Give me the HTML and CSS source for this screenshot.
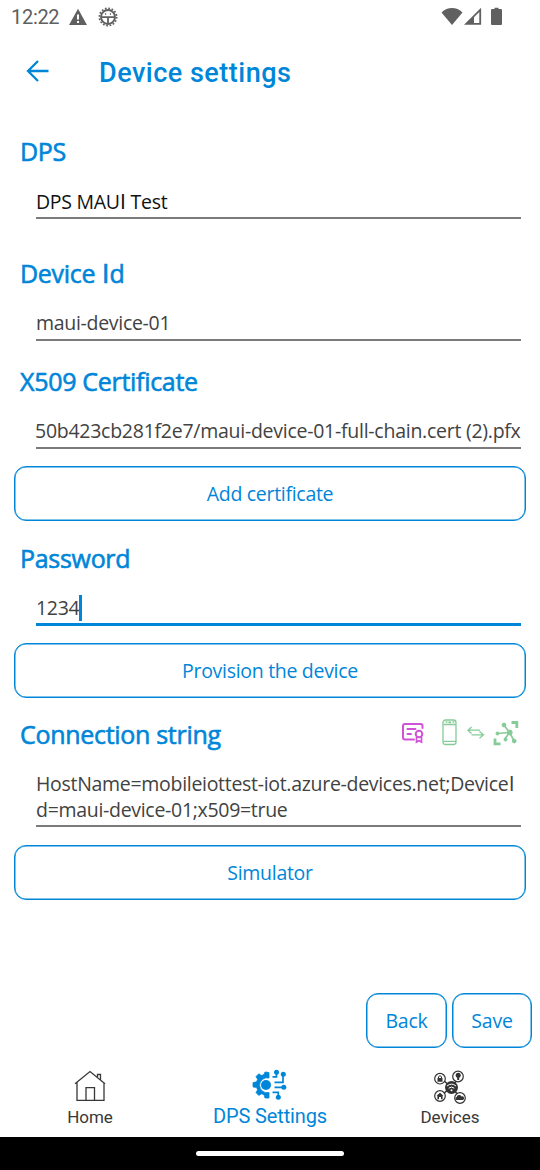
FILE: index.html
```html
<!DOCTYPE html>
<html lang="en">
<head>
<meta charset="utf-8">
<title>Device settings</title>
<link rel="stylesheet" href="styles.css">
</head>
<body>
<div class="screen">
  <div class="status">
    <span class="clock">12:22</span>
    <svg class="warn" width="20" height="18" viewBox="0 0 20 18"><path d="M10 .8 19 17H1z" fill="#606060"/><path d="M10 6.5v5M10 13v2" stroke="#fff" stroke-width="2"/></svg>
    <svg class="debug" width="20" height="20" viewBox="0 0 20 20" fill="none" stroke="#606060"><circle cx="10" cy="10" r="8.6" stroke-width="1.800" stroke-dasharray="1.7 1.68"/><circle cx="10" cy="10" r="7" stroke-width="1.900"/><path d="M3 10.200h14M10 10v7" stroke-width="1.800"/><path d="M7 7h1.200M11.800 7H13" stroke-width="1.300"/></svg>
    <span class="spacer"></span>
    <svg width="62" height="20" viewBox="0 0 62 20" fill="#606060"><path d="M.5 5.400C6.500-.4 15.500-.4 21.500 5.400L11 18z"/><path d="M23 17.700 40.100.800v16.900z"/><path d="M33 10.200l5.300-5.200v11H33z" fill="#fff"/><path d="M51 2h2.500V.800h4V2H60q1 0 1 1v14q0 1-1 1h-9q-1 0-1-1V3q0-1 1-1z"/></svg>
  </div>
  <header class="toolbar">
    <svg width="24" height="24" viewBox="0 0 24 24" fill="none" stroke="#0086d9" stroke-width="2.300"><path d="M12 2 2 12l10 10M2 12h20.500"/></svg>
    <h1>Device settings</h1>
  </header>
  <main class="form">
    <section class="group dps">
      <h2>DPS</h2>
      <div class="field strong"><p>DPS MAU<span class="plain">I</span> Test</p></div>
    </section>
    <section class="group device">
      <h2>Device <span class="plain">I</span>d</h2>
      <div class="field"><p>maui-device-01</p></div>
    </section>
    <section class="group cert">
      <h2>X509 Certificate</h2>
      <div class="field"><p class="path">50b423cb281f2e7/maui-device-01-full-chain.cert (2).pfx</p></div>
      <button class="btn">Add certificate</button>
    </section>
    <section class="group password">
      <h2>Password</h2>
      <div class="field focus"><p>1234<span class="caret"></span></p></div>
      <button class="btn">Provision the device</button>
    </section>
    <section class="group connection">
      <div class="heading-row">
        <h2>Connection string</h2>
        <svg width="120" height="30" viewBox="0 0 120 30" fill="none">
          <g stroke="#d053d6" stroke-width="2" stroke-linecap="round"><path d="M13 20.500H4q-2 0-2-2V7q0-2 2-2h15.500q2 0 2 2v2"/><path d="M6.500 10h8M6.500 15H10"/><circle cx="18" cy="15" r="3.300"/><path d="M15.500 18.500V23l2.500-1.300 2.500 1.300v-4.500" stroke-width="1.700"/></g>
          <g stroke="#86cc98" stroke-width="1.300"><rect x="42" y="1" width="13" height="24.500" rx="2.500"/><path d="M42.400 5.500H55M42.400 22.300H55M44.500 3h2M51.400 3h2"/><path d="M47.400 3.300h2.500" stroke-width="2"/></g>
          <path d="M70.500 8 67 11.200l3.500 3.300M67 11.200h12M78.500 12.500l4 3.300-4 3.400M82.500 15.800h-12" stroke="#86cc98" stroke-width="1.300"/>
          <g transform="translate(1.500 0)" fill="#86cc98" stroke="#86cc98"><path d="m107 13.500-6-8M107 13.500l-13 1M107 13.500l-5 7M107 13.500l4.500 8" stroke-width="1.600"/><circle cx="101.500" cy="6" r="1.900"/><circle cx="95" cy="14.500" r="1.500"/><circle cx="107.300" cy="13.500" r="2.400"/><circle cx="103" cy="20.500" r="1.500"/><circle cx="111.700" cy="22" r="1.900"/><path d="M109 3.500h5.300V9M92.500 19.500v5.300H98" fill="none" stroke-width="2.800"/></g>
        </svg>
      </div>
      <div class="field"><p>HostName=mobileiottest-iot.azure-devices.net;Device<span class="plain">I</span><br>d=maui-device-01;x509=true</p></div>
      <button class="btn">Simulator</button>
    </section>
  </main>
  <div class="actions">
    <button class="btn">Back</button>
    <button class="btn">Save</button>
  </div>
  <nav class="tabs">
    <a class="tab">
      <svg width="34" height="32" viewBox="0 0 34 32" fill="none" stroke="#383838" stroke-width="1.300"><path d="M2 13.700 17 1.500l15 12.200M4 12v18.400h27V12.500M13 30V17.700h8.500V30M24.500 7V4.500h3V10"/></svg>
      <span>Home</span>
    </a>
    <a class="tab active">
      <svg width="36" height="32" viewBox="0 0 36 32" fill="none" stroke="#0086d9"><path d="M17 3.500v5.500a7.500 7.500 0 1 0 0 14.500V29h-4l-.8-3.200-2.700-1-2.700 1.600L4 23.600l1.600-2.700-1-2.400L1 17.900v-4.300l3.600-.8 1-2.500L4 7.600l2.800-2.800 2.700 1.700 2.500-1L13 3z" fill="#0086d9" stroke="#0086d9" stroke-width=".8" stroke-linejoin="round"/><circle cx="14" cy="16" r="5" fill="#0086d9" stroke="none"/><path d="M20.500 7.800h4V3M22.500 13.300h8.500V5M22.500 18.300h9.500M20.500 23.300h5.800V28" stroke-width="1.700"/><g fill="#0086d9" stroke="none"><circle cx="24.500" cy="3.300" r="2.500"/><circle cx="31.300" cy="5.200" r="2.500"/><circle cx="31.800" cy="18.300" r="2.500"/><circle cx="26.300" cy="28.300" r="2.500"/></g></svg>
      <span>DPS Settings</span>
    </a>
    <a class="tab">
      <svg class="hub" width="34" height="34" viewBox="0 0 34 34" fill="none" stroke="#333"><path d="m8 9 9 8 9-10M7 26l10-9 10 11" stroke-width="1.500"/><circle cx="17.500" cy="17.500" r="6.500" fill="#333" stroke="none"/><g fill="#fff" stroke-width="1.200"><circle cx="6" cy="8.700" r="5.300"/><circle cx="24" cy="6.500" r="5.300"/><circle cx="6" cy="26" r="5.300"/><circle cx="26" cy="28" r="5.300"/></g><path d="M13 16q4.500-3.700 9 0M14.700 18.200q2.800-2.300 5.600 0" stroke="#fff" stroke-width="1"/><circle cx="17.500" cy="20.300" r="1" fill="#fff" stroke="none"/><g fill="#333" stroke="none"><path d="M3.500 8h5v3.700h-5zM2.500 25.700 6 22.700l3.500 3H8.600v3.500H7V27H5v2.200H3.400v-3.500zM22.300 30a1.600 1.600 0 0 1 .4-3 2.500 2.500 0 0 1 4.700-.6 1.800 1.800 0 0 1 1.500 3.600z"/><circle cx="24.200" cy="5.300" r="2.500"/><path d="M23.200 7h2v3h-2z"/></g><path d="M4.500 8V6.700q1.500-2 3 0V8" stroke-width="1"/></svg>
      <span>Devices</span>
    </a>
  </nav>
  <div class="gesture"><span></span></div>
</div>
</body>
</html>
```
FILE: styles.css
```css
* { box-sizing: border-box; }
body { margin: 0; background: #fff; font-family: "Open Sans", sans-serif; color: #424242; }
h1, h2, p { margin: 0; font-weight: 400; }
svg { display: block; flex: none; }
.screen { width: 540px; height: 1170px; display: flex; flex-direction: column; background: #fff; overflow: hidden; }
.status { height: 34px; flex: none; display: flex; align-items: center; padding: 0 37px 0 11px; font: 20px/34px Roboto, sans-serif; color: #606060; }
.clock { width: 57px; letter-spacing: -0.3px; }
.debug { margin-left: 10px; }
.spacer { flex: 1; }
.toolbar { height: 78px; flex: none; display: flex; align-items: center; gap: 49px; padding: 0 26px; color: #0086d9; }
.toolbar svg { margin-bottom: 5px; }
.toolbar h1 { font: 500 27px/36px Roboto, sans-serif; letter-spacing: 0.5px; }
.form { padding: 21px 14px 0; flex: 1; }
.group { display: flex; flex-direction: column; }
.group h2 { padding-left: 6px; font-size: 25px; line-height: 36px; letter-spacing: -0.3px; color: #0086d9; -webkit-text-stroke: 0.6px #0086d9; white-space: nowrap; }
/* Capital I without serifs */
.plain { font-family: Roboto, sans-serif; line-height: 1; margin: 0 0.03em; }
.device { margin-top: 36px; }
.cert { margin-top: 22px; }
.password { margin-top: 19px; }
.connection { margin-top: 18px; }
.field { margin: 0 5px 0 22px; height: 50px; padding-top: 19px; font-size: 19.5px; line-height: 26px; letter-spacing: -0.3px; border-bottom: 2px solid #7b7b7b; white-space: nowrap; }
.field.strong { color: #111; padding-top: 20px; }
.path { margin-left: -1px; letter-spacing: -0.26px; }
.cert .btn { margin-top: 17px; }
.field.focus { border-bottom: 3px solid #0086d9; }
.focus p { display: flex; align-items: center; }
.caret { width: 3px; height: 26px; background: #0086d9; }
.connection .field { height: 75px; }
.heading-row { display: flex; justify-content: space-between; align-items: center; padding-right: 5px; height: 36px; }
.btn { display: block; width: 100%; height: 55px; margin: 18px 0 0; padding: 0; background: #fff; border: 1px solid #0086d9; box-shadow: inset 0 0 0 0.5px #0086d9; border-radius: 12px; color: #0086d9; font: 19.5px/26px "Open Sans", sans-serif; letter-spacing: -0.3px; }
.password .btn { margin-top: 17px; }
.actions { display: flex; justify-content: flex-end; gap: 5px; height: 55px; flex: none; padding-right: 8px; }
.actions .btn { width: 81px; margin: 0; letter-spacing: -0.2px; }
.actions .btn:last-child { width: 80px; }
.tabs { height: 89px; flex: none; display: flex; }
.tab { flex: 1; display: flex; flex-direction: column; align-items: center; justify-content: space-between; padding: 22px 0 9px; font: 17px/22px Roboto, sans-serif; color: #383838; letter-spacing: 0; }
.tab.active { color: #0086d9; font-size: 20px; padding: 21px 0 10px; letter-spacing: -0.15px; }
.hub { margin-left: 2px; }
.gesture { height: 33px; flex: none; background: #000; display: flex; justify-content: center; align-items: center; }
.gesture span { width: 148px; height: 5px; border-radius: 3px; background: #fff; }
```
